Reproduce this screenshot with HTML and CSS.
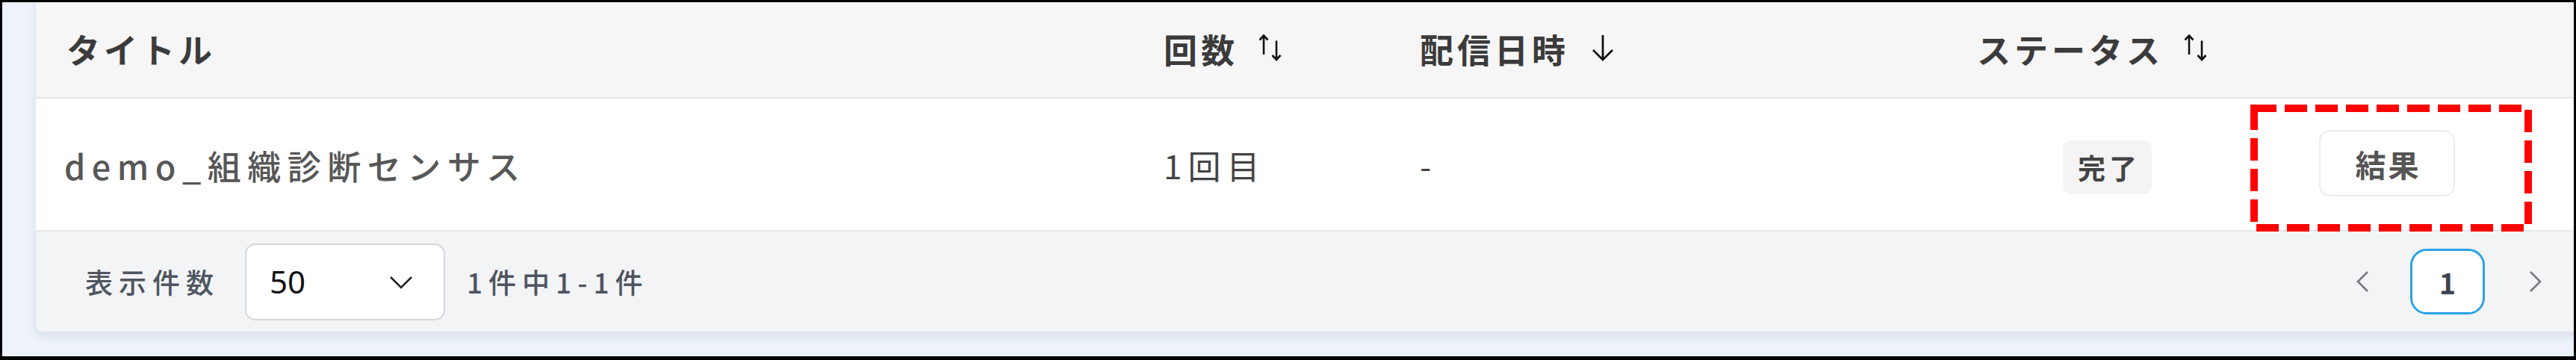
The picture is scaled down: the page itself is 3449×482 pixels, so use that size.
FILE: index.html
```html
<!DOCTYPE html>
<html lang="ja">
<head>
<meta charset="utf-8">
<title>配信一覧</title>
<link rel="stylesheet" href="styles.css">
</head>
<body>
<div class="frame">
  <div class="card">
    <div class="row head">
      <div class="cell c-title"><span class="htxt">タイトル</span></div>
      <div class="cell c-count"><span class="htxt">回数</span>
        <svg class="ico-sort" viewBox="0 0 36 36" width="36" height="36"><path d="M7 1.5V27M1.5 7.5L7 1.5 12.5 7.5M24 8.5V34M18.5 28L24 34 29.5 28" fill="none" stroke="#111" stroke-width="2.6"/></svg>
      </div>
      <div class="cell c-date"><span class="htxt">配信日時</span>
        <svg class="ico-down" viewBox="0 0 30 36" width="30" height="36"><path d="M15 1V34M2 21L15 34 28 21" fill="none" stroke="#111" stroke-width="2.8"/></svg>
      </div>
      <div class="cell c-status"><span class="htxt">ステータス</span>
        <svg class="ico-sort" viewBox="0 0 36 36" width="36" height="36"><path d="M7 1.5V27M1.5 7.5L7 1.5 12.5 7.5M24 8.5V34M18.5 28L24 34 29.5 28" fill="none" stroke="#111" stroke-width="2.6"/></svg>
      </div>
      <div class="cell c-action"></div>
    </div>
    <div class="row body">
      <div class="cell c-title"><span class="title-txt">demo_組織診断センサス</span></div>
      <div class="cell c-count"><span class="btxt">1回目</span></div>
      <div class="cell c-date"><span class="btxt">-</span></div>
      <div class="cell c-status"><span class="badge">完了</span></div>
      <div class="cell c-action"><button class="result-btn">結果</button></div>
    </div>
    <div class="footer">
      <span class="ftxt">表示件数</span>
      <div class="select">
        <span class="sel-val">50</span>
        <svg class="sel-chev" viewBox="0 0 32 18" width="32" height="18"><path d="M2 2L16 16 30 2" fill="none" stroke="#222" stroke-width="2.6"/></svg>
      </div>
      <span class="ftxt count">1件中1-1件</span>
      <div class="pager">
        <svg class="pg-arrow" viewBox="0 0 20 30" width="20" height="30"><path d="M17 2L4 15 17 28" fill="none" stroke="#777c85" stroke-width="2.8"/></svg>
        <span class="pg-num">1</span>
        <svg class="pg-arrow" viewBox="0 0 20 30" width="20" height="30"><path d="M3 2L16 15 3 28" fill="none" stroke="#777c85" stroke-width="2.8"/></svg>
      </div>
    </div>
  </div>
  <svg class="annot" viewBox="0 0 377 170" width="377" height="170"><rect x="5" y="5" width="367" height="160" fill="none" stroke="#ff0000" stroke-width="10" stroke-dasharray="30 11"/></svg>
</div>
</body>
</html>
```

FILE: styles.css
```css
html, body {
  margin: 0;
  padding: 0;
  background: #eef3fb;
}

.frame {
  position: relative;
  width: 3449px;
  height: 482px;
  box-sizing: border-box;
  border: 3px solid #000;
  border-bottom-width: 5px;
  background: #eef3fb;
  overflow: hidden;
  font-family: "Noto Sans CJK JP", "Noto Sans", sans-serif;
}

.card {
  margin-top: -3px;
  margin-left: 45px;
  width: 3420px;
  background: #fff;
  border-radius: 0 0 10px 10px;
  box-shadow: 0 6px 14px rgba(60, 70, 90, 0.12);
}

.row {
  display: grid;
  grid-template-columns: 1510px 343px 746px 360px 1fr;
  align-items: center;
}

.head {
  height: 132px;
  background: #f6f6f6;
  border-bottom: 2px solid #e7e7ee;
  box-sizing: border-box;
}

.body {
  height: 178px;
  background: #fff;
  border-bottom: 2px solid #e7e7ee;
  box-sizing: border-box;
  padding-top: 2px;
}

.cell {
  display: flex;
  align-items: center;
}

.head .c-title { padding-left: 41px; }
.body .c-title { padding-left: 38px; }

.htxt {
  font-size: 45px;
  font-weight: 700;
  letter-spacing: 5px;
  color: #3b3b3b;
  line-height: 1;
}

.ico-sort { margin-left: 27px; margin-top: -2px; flex-shrink: 0; }
.ico-down { margin-left: 30px; margin-top: -2px; flex-shrink: 0; }

.title-txt {
  font-size: 45px;
  font-weight: 500;
  letter-spacing: 8.5px;
  color: #575757;
  line-height: 1;
}

.btxt {
  font-size: 44px;
  font-weight: 400;
  letter-spacing: 8px;
  color: #444;
  line-height: 1;
}

.body .c-status { padding-left: 115px; }

.badge {
  display: flex;
  align-items: center;
  justify-content: center;
  width: 119px;
  height: 72px;
  margin-top: 6px;
  border-radius: 10px;
  background: #f4f4f4;
  font-size: 37px;
  font-weight: 700;
  letter-spacing: 5px;
  padding-left: 5px;
  box-sizing: border-box;
  color: #444;
}

.body .c-action { padding-left: 98px; }

.result-btn {
  width: 182px;
  height: 89px;
  margin-top: -5px;
  border: 2px solid #ececec;
  border-radius: 15px;
  background: #fff;
  font-family: "Noto Sans CJK JP", sans-serif;
  font-size: 41px;
  font-weight: 700;
  letter-spacing: 3px;
  color: #555;
  padding: 0 0 0 3px;
}

.footer {
  display: flex;
  align-items: center;
  height: 134px;
  background: #f3f4f6;
  border-radius: 0 0 10px 10px;
  padding-left: 66px;
  padding-right: 63px;
}

.ftxt {
  font-size: 37px;
  font-weight: 500;
  letter-spacing: 8px;
  color: #4f5560;
  line-height: 1;
  flex-shrink: 0;
}

.select {
  flex-shrink: 0;
  display: flex;
  align-items: center;
  justify-content: space-between;
  width: 268px;
  height: 103px;
  margin-left: 34px;
  margin-right: 29px;
  box-sizing: border-box;
  border: 2px solid #d6d7db;
  border-radius: 14px;
  background: #fff;
  padding-left: 31px;
  padding-right: 41px;
}

.sel-val {
  font-family: "Noto Sans", sans-serif;
  font-size: 42px;
  color: #111;
  line-height: 1;
}

.sel-chev { margin-top: 2px; flex-shrink: 0; }

.pager {
  margin-left: auto;
  display: flex;
  align-items: center;
}

.pg-arrow { flex-shrink: 0; }

.pg-num {
  display: flex;
  align-items: center;
  justify-content: center;
  width: 100px;
  height: 88px;
  margin: 0 58px 0 54px;
  box-sizing: border-box;
  border: 3px solid #2aa3e4;
  border-radius: 22px;
  background: #fff;
  font-size: 38px;
  font-weight: 700;
  color: #3f4450;
}

.annot {
  position: absolute;
  left: 3010px;
  top: 137px;
}
```
